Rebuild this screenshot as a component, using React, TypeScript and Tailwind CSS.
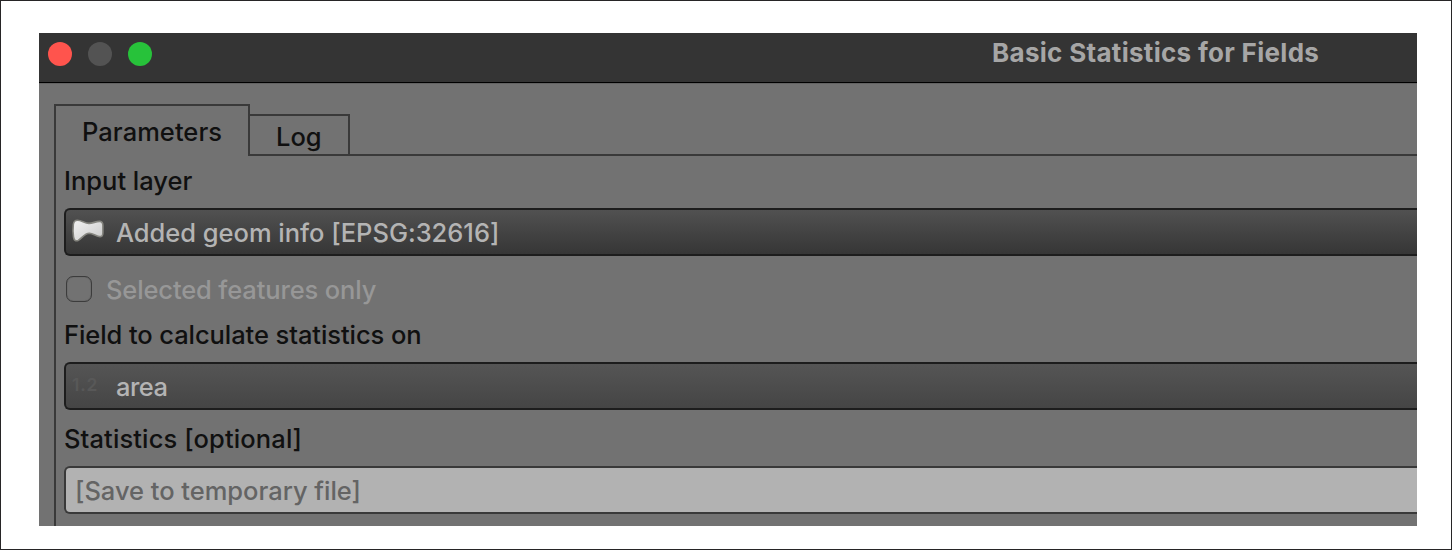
import type { ReactNode } from "react";

function PolygonIcon() {
  return (
    <svg width="34" height="26" viewBox="0 0 34 26" className="mb-0.5 shrink-0" aria-hidden="true">
      <defs>
        <linearGradient id="poly" x1="0" y1="0" x2="1" y2="1">
          <stop offset="0" stopColor="#f2f2f2" />
          <stop offset="1" stopColor="#c9c9c9" />
        </linearGradient>
      </defs>
      <path
        d="M6.500 2.300C10.500 2.300 13.500 5.200 18 5.400C22 5.400 25 3.100 29 3.400C31.200 3.600 31.900 5 31.900 7.500V15C31.900 18 30.500 18.900 28 18.500C24.500 17.700 22 15.300 18.300 15.200C13.500 15.300 11 20.200 7.200 22.400C4.500 23.600 3 22 2.500 19C1.900 15 1.900 10 2.300 6.500C2.700 3.500 4 2.300 6.500 2.300Z"
        fill="url(#poly)"
        stroke="#85857f"
        strokeWidth="1.600"
        strokeLinejoin="round"
      />
    </svg>
  );
}

function Label({ className, children }: { className: string; children: ReactNode }) {
  return <div className={`whitespace-nowrap font-medium text-[#101010] ${className}`}>{children}</div>;
}

export default function App() {
  return (
    <div className="h-[550px] w-[1452px] overflow-hidden border border-[#272526] bg-white pl-[38px] pt-8 font-['Inter','Liberation_Sans',sans-serif] text-[25.5px] antialiased">
      <div className="flex h-[493px] w-[1378px] flex-col overflow-hidden bg-[#727272]">
        <header className="flex h-[50px] shrink-0 items-start border-b border-black bg-[#343434] pl-[9px]">
          <div className="flex gap-4 pt-[9px]">
            <span className="size-6 rounded-full bg-[#ff544d]" />
            <span className="size-6 rounded-full bg-[#535353]" />
            <span className="size-6 rounded-full bg-[#27c23a]" />
          </div>
          <h1 className="ml-[840px] whitespace-nowrap text-[26px] font-bold leading-[40px] tracking-[0.3px] text-[#a6a6a6]">
            Basic Statistics for Fields
          </h1>
        </header>
        <div className="flex min-h-0 grow flex-col border-t border-[#636363] pl-[15px] pt-5">
          <div className="flex h-[52px] shrink-0 items-end font-medium text-[#101010]">
            <div className="h-[52px] w-[196px] border-x-2 border-t-2 border-[#393939] pl-[26px] leading-[51px]">
              <span className="tracking-[0.05px]">Parameters</span>
            </div>
            <div className="h-[42px] w-[100px] border-y-2 border-r-2 border-[#393939] pl-[26px] leading-[42px]">
              <span>Log</span>
            </div>
            <div className="h-0.5 grow bg-[#393939]" />
          </div>
          <main className="min-h-0 grow border-l-2 border-[#393939] pl-2">
            <Label className="h-[52px] leading-[50px]">Input layer</Label>
            <div className="flex h-12 items-center rounded-l-[6px] border-2 border-r-0 border-[#1d1d1d] bg-linear-to-b from-[#515151] to-[#363636] pl-[5px] text-[#b4b4b4]">
              <PolygonIcon />
              <span className="ml-[11px] mt-0.5 whitespace-nowrap font-medium tracking-[-0.02px]">Added geom info [EPSG:32616]</span>
            </div>
            <div className="flex h-[66px] items-center pl-0.5 text-[#979797]">
              <span className="size-[26px] rounded-[7px] border border-[#3c3c3c] shadow-[inset_0_0_1px_#3c3c3c]" />
              <span className="ml-3.5 mt-0.5 whitespace-nowrap font-medium tracking-[-0.13px]">Selected features only</span>
            </div>
            <Label className="h-[40px] leading-[26px] tracking-[-0.08px]">Field to calculate statistics on</Label>
            <div className="flex h-12 items-center rounded-l-[6px] border-2 border-r-0 border-[#1d1d1d] bg-linear-to-b from-[#555] to-[#454545] pl-[6px] text-[#b4b4b4]">
              <span className="mb-px w-[44px] text-[17.5px] font-semibold tracking-[0.8px] text-[#585858]">1.2</span>
              <span className="mt-0.5 font-medium tracking-[-0.5px]">area</span>
            </div>
            <Label className="h-[56px] leading-[58px] tracking-[0.12px]">Statistics [optional]</Label>
            <div className="flex h-12 items-center rounded-l-[6px] border-2 border-r-0 border-[#393939] bg-[#b2b2b2] pl-[9px] text-[#646464]">
              <span className="mt-0.5 whitespace-nowrap font-medium tracking-[-0.02px]">[Save to temporary file]</span>
            </div>
          </main>
        </div>
      </div>
    </div>
  );
}
